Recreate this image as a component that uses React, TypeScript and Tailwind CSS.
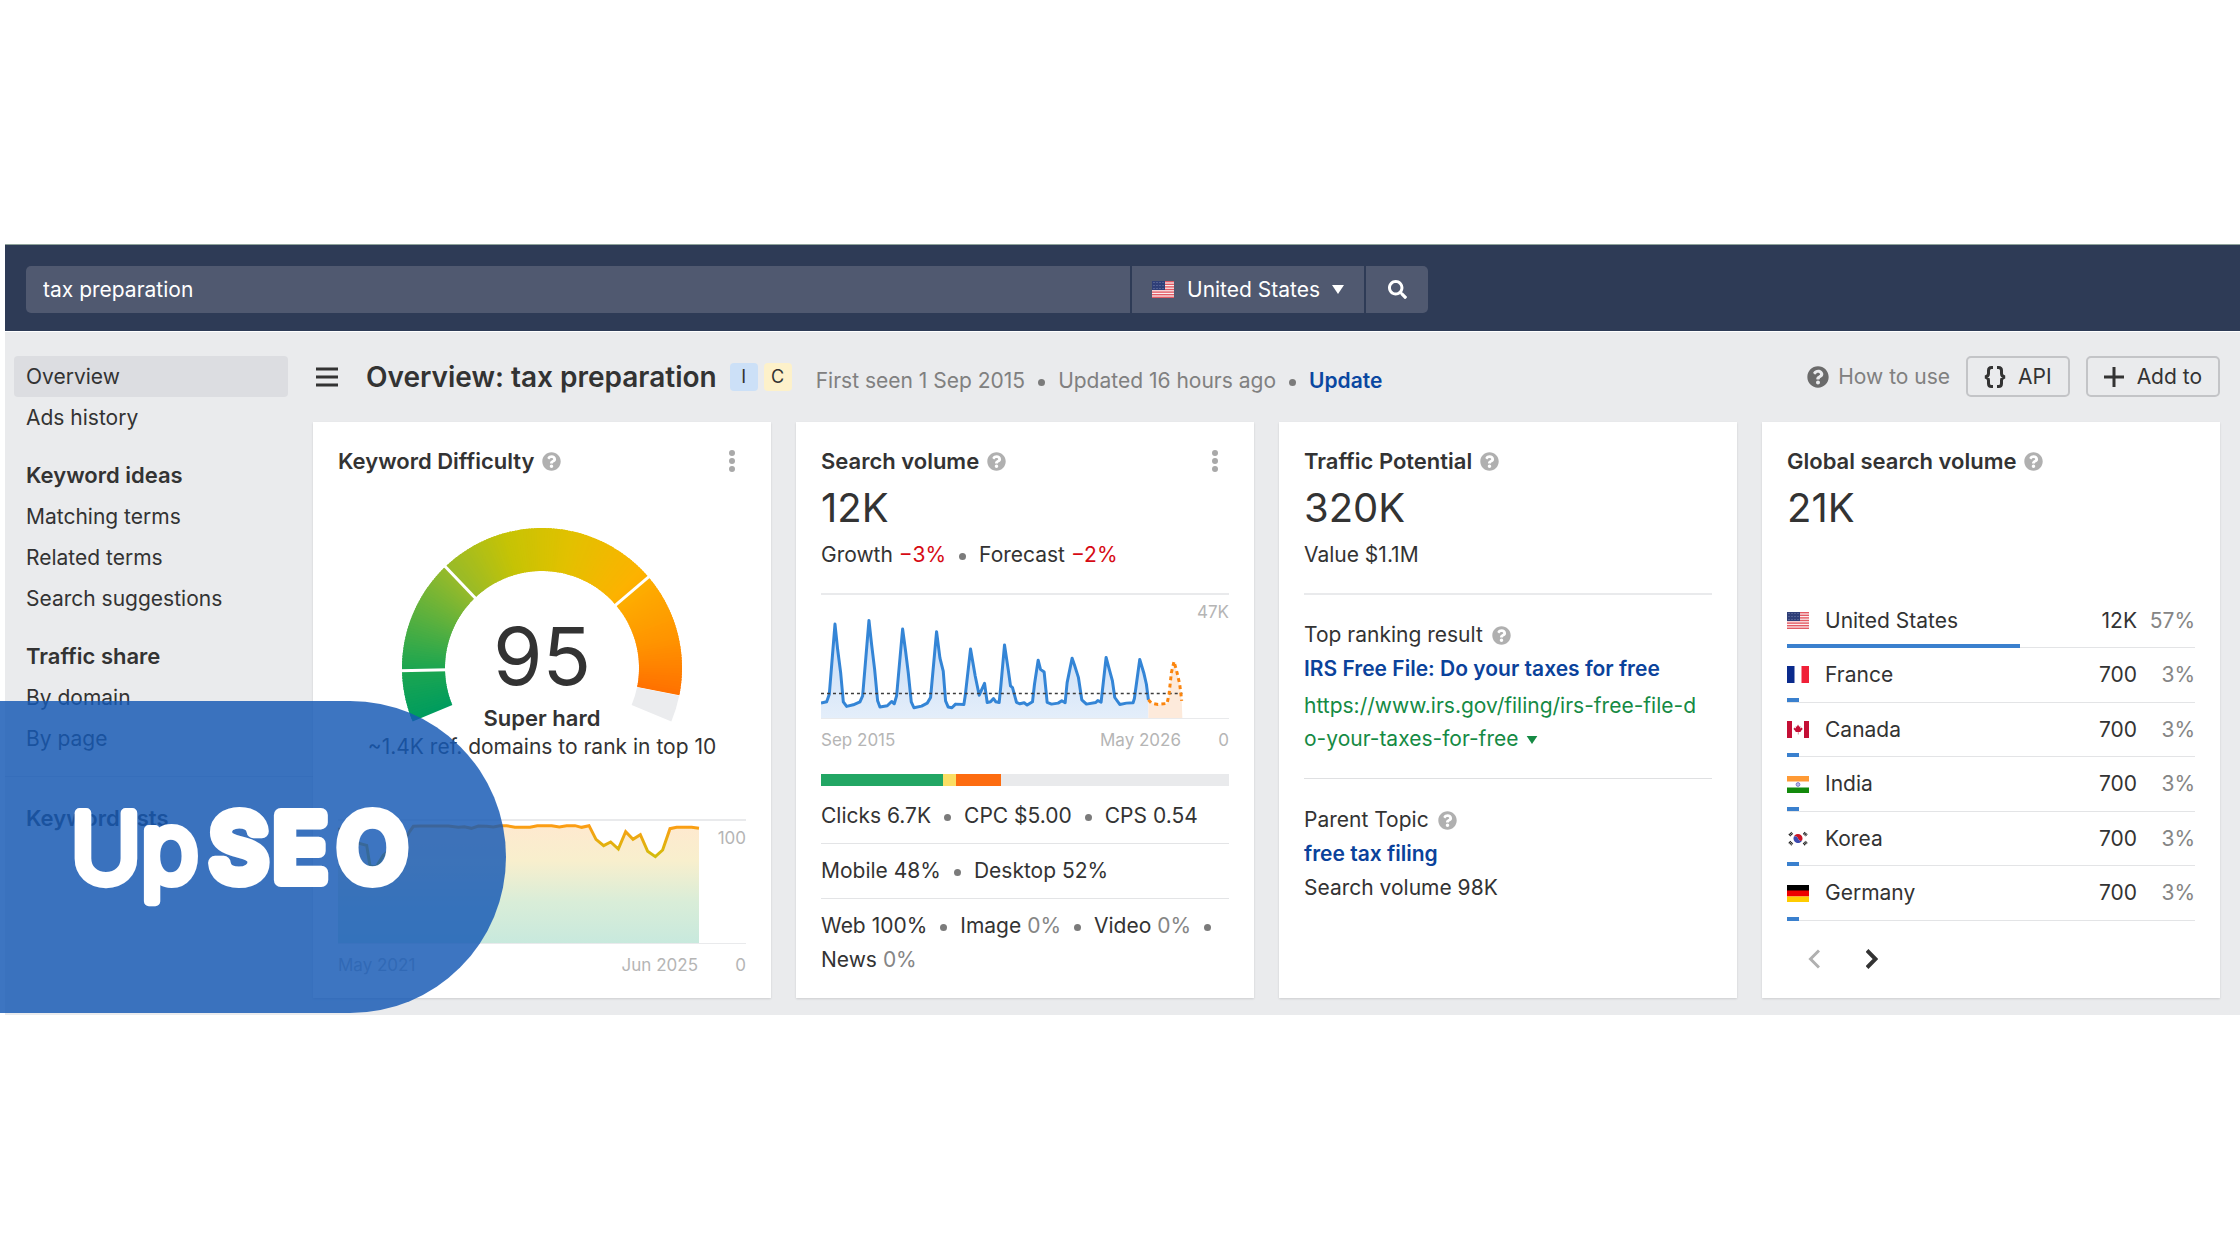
import type { ReactNode } from "react";
import { FaQuestionCircle, FaSearch } from "react-icons/fa";

const SEARCH_LINE =
  "93,402 110,398 118,375 135,163 143,240 152,310 160,398 170,412 190,407 210,398 218,380 237,152 245,225 254,300 263,395 270,414 292,410 305,397 313,404 320,380 338,178 347,245 355,310 364,398 372,416 395,411 412,402 422,385 440,186 450,265 460,305 467,395 475,414 486,416 497,405 522,406 526,380 542,238 556,320 568,378 584,342 592,400 602,398 611,388 618,398 628,400 633,350 644,226 655,300 662,350 668,355 680,400 690,404 703,401 712,408 728,398 734,345 745,272 752,300 763,308 772,400 785,405 805,402 816,395 826,401 832,340 847,266 855,290 866,325 876,392 890,405 918,400 924,394 934,399 949,264 960,305 968,335 975,385 990,406 1010,402 1030,401 1034,388 1050,270 1062,310 1070,345 1076,392";
const FORECAST_LINE = "1076,392 1085,402 1105,406 1132,403 1138,375 1145,310 1153,276 1162,310 1170,345 1176,395";
const DIFFICULTY_LINE =
  "-186,72 -166,70 -150,84 -130,112 -100,120 -90,182 -72,186 -50,150 -25,130 0,128 28,80 40,63 60,62 145,62 175,66 193,64 214,69 235,62 260,63 280,65 300,61 320,61 345,66 390,66 412,61 455,61 478,65 500,61 525,61 545,66 567,61 588,102 611,121 632,110 655,131 677,79 699,102 721,88 743,138 766,154 788,134 810,70 830,66 875,66 897,69";

const GAUGE_STOPS: [number, number[]][] = [
  [0, [0, 156, 94]],
  [0.1, [30, 166, 80]],
  [0.2, [90, 176, 62]],
  [0.3, [150, 186, 42]],
  [0.43, [198, 195, 5]],
  [0.55, [225, 193, 0]],
  [0.7, [253, 178, 0]],
  [0.84, [255, 148, 0]],
  [0.95, [255, 112, 0]],
];

function gaugeColor(t: number) {
  const hi = Math.max(1, GAUGE_STOPS.findIndex(([stop]) => stop >= t));
  const [t0, a] = GAUGE_STOPS[hi - 1];
  const [t1, b] = GAUGE_STOPS[hi];
  const k = (t - t0) / (t1 - t0);
  return `rgb(${a.map((v, i) => Math.round(v + (b[i] - v) * k)).join(",")})`;
}

function gaugePoint(t: number, radius: number) {
  const angle = ((202.5 - t * 225) * Math.PI) / 180;
  return `${(145 + radius * Math.cos(angle)).toFixed(2)},${(142 - radius * Math.sin(angle)).toFixed(2)}`;
}

function ringSlice(from: number, to: number) {
  return `M${gaugePoint(from, 140)} A140,140 0 0 1 ${gaugePoint(to, 140)} L${gaugePoint(to, 97)} A97,97 0 0 0 ${gaugePoint(from, 97)}Z`;
}

function Gauge() {
  const steps = 190;
  return (
    <svg viewBox="0 0 290 206" className="h-[206px] w-[290px]" aria-hidden="true">
      {Array.from({ length: steps }, (_, i) => {
        const from = (i / steps) * 0.95;
        const to = Math.min(0.95, ((i + 1.6) / steps) * 0.95);
        return <path key={i} d={ringSlice(from, to)} fill={gaugeColor(from)} />;
      })}
      <path d={ringSlice(0.951, 1)} fill="#ebecee" />
      {[0.095, 0.306, 0.72].map((t) => (
        <path key={t} d={`M${gaugePoint(t, 94)} L${gaugePoint(t, 143)}`} stroke="#fff" strokeWidth="3" />
      ))}
    </svg>
  );
}

function Flag({ code }: { code: string }) {
  return (
    <svg viewBox="0 0 22 17" className="h-[17px] w-[22px] shrink-0" aria-hidden="true">
      {code === "us" && (
        <>
          <rect width="22" height="17" fill="#fbeff0" />
          {[0, 1, 2, 3, 4, 5, 6].map((i) => (
            <rect key={i} y={i * 2.6} width="22" height="1.4" fill="#e35a64" />
          ))}
          <rect width="13" height="9" fill="#2f3f78" />
          {[2, 5, 8, 11].map((x) => [1.5, 4.5, 7.5].map((y) => <circle key={`${x}-${y}`} cx={x} cy={y} r="0.5" fill="#8d98bd" />))}
        </>
      )}
      {code === "fr" && (
        <>
          <rect width="7.5" height="17" fill="#0a2a8c" />
          <rect x="14.5" width="7.5" height="17" fill="#f02038" />
        </>
      )}
      {code === "ca" && (
        <>
          <rect width="5" height="17" fill="#c40f35" />
          <rect x="17" width="5" height="17" fill="#c40f35" />
          <path d="M11 3.5l1.2 2.2 1.2-.5-.3 2.2 1.7-.9.3 1 .9.2-2.4 2.5.2.9-2.4-.2v2.6h-.5v-2.6l-2.5.2.2-.9L6.2 7.7l.9-.2.3-1 1.6.9-.3-2.2 1.2.5z" fill="#c40f35" />
        </>
      )}
      {code === "in" && (
        <>
          <rect width="22" height="5.5" fill="#ff9a35" />
          <rect y="11.5" width="22" height="5.5" fill="#138a0c" />
          <circle cx="11" cy="8.5" r="1.9" fill="#b9b7e3" stroke="#6a67c0" strokeWidth="0.8" />
        </>
      )}
      {code === "kr" && (
        <>
          <path d="M6.8 6.8a4.4 4.4 0 0 1 8.4 3.4c-1.5 1.6-3.3.6-4.2-1.7-.9-2-2.7-2.8-4.2-1.7z" fill="#cc1424" />
          <path d="M6.8 6.8c1.5-1.1 3.3-.3 4.2 1.7.9 2.3 2.7 3.3 4.2 1.7a4.4 4.4 0 0 1-8.4-3.4z" fill="#3c4bb0" />
          <g stroke="#222" strokeWidth="3" strokeDasharray="1.2 0.4">
            <path d="M2.3 5.3l3-2.4M16.7 2.9l3 2.4M2.3 11.9l3 2.6M16.7 14.5l3-2.6" />
          </g>
        </>
      )}
      {code === "de" && (
        <>
          <rect width="22" height="6" fill="#000" />
          <rect y="5.5" width="22" height="6" fill="#e00" />
          <rect y="11.5" width="22" height="5.5" fill="#fc0" />
        </>
      )}
    </svg>
  );
}

const Dot = () => <span className="mx-[13px] inline-block size-[7px] rounded-full bg-[#7b7b7b] align-middle" />;

const Help = () => (
  <button type="button" aria-label="Help" className="text-[#b0b0b0]">
    <FaQuestionCircle className="size-[19px]" />
  </button>
);

function Caret({ className }: { className: string }) {
  return (
    <svg viewBox="0 0 12 9" className={className} fill="currentColor" aria-hidden="true">
      <path d="M0 0h12L6 9z" />
    </svg>
  );
}

function CardTitle({ children, menu }: { children: ReactNode; menu?: boolean }) {
  return (
    <div className="flex items-center gap-2 leading-[34px]">
      <h2 className="text-[22px] font-semibold">{children}</h2>
      <Help />
      {menu && (
        <button type="button" aria-label={`${children} menu`} className="mr-[11px] ml-auto text-[#a9a9a9]">
          <svg viewBox="0 0 6 22" className="h-[22px] w-[6px]" fill="currentColor">
            <circle cx="3" cy="3" r="3" />
            <circle cx="3" cy="11" r="3" />
            <circle cx="3" cy="19" r="3" />
          </svg>
        </button>
      )}
    </div>
  );
}

const Card = ({ children }: { children: ReactNode }) => (
  <section className="flex min-h-[576px] flex-col bg-white px-[25px] pt-[22px] pb-[21px] shadow-[0_1px_2px_rgba(0,0,0,0.12)]">{children}</section>
);

const BigNumber = ({ children }: { children: ReactNode }) => <p className="text-[40px] leading-[60px]">{children}</p>;

function ChartLabels({ from, to }: { from: string; to: string }) {
  return (
    <div className="mt-[9px] flex text-[17px] leading-6 text-[#b5b5b5]">
      <span>{from}</span>
      <span className="ml-auto">{to}</span>
      <span className="w-12 text-right">0</span>
    </div>
  );
}

function NavGroup({ title, items }: { title?: string; items: string[] }) {
  return (
    <div className="mb-[17px] pr-[25px] pl-[9px] leading-[41px]">
      {title && <h3 className="px-3 text-[22px] font-semibold">{title}</h3>}
      <ul>
        {items.map((item) => (
          <li key={item}>
            <a href="#" className={item === "Overview" ? "block rounded-[4px] bg-[#dcdde1] px-3" : "block px-3"}>
              {item}
            </a>
          </li>
        ))}
      </ul>
    </div>
  );
}

const COUNTRIES = [
  { code: "us", name: "United States", volume: "12K", share: 57 },
  { code: "fr", name: "France", volume: "700", share: 3 },
  { code: "ca", name: "Canada", volume: "700", share: 3 },
  { code: "in", name: "India", volume: "700", share: 3 },
  { code: "kr", name: "Korea", volume: "700", share: 3 },
  { code: "de", name: "Germany", volume: "700", share: 3 },
];

function TopBar() {
  return (
    <header className="border-t border-b border-t-[#8fa39b] border-b-white bg-[#2e3b56] pt-[21px] pb-[18px] pl-[21px] text-white">
      <form className="flex h-[47px] w-[1402px] max-w-full gap-[2px] overflow-hidden rounded-[5px]" onSubmit={(e) => e.preventDefault()}>
        <input aria-label="Keyword" defaultValue="tax preparation" className="min-w-0 flex-1 bg-[#505970] px-[17px] outline-none" />
        <div className="relative flex w-[232px] items-center bg-[#505970]">
          <span className="pointer-events-none absolute left-5">
            <Flag code="us" />
          </span>
          <select aria-label="Country" className="h-full w-full appearance-none bg-transparent pl-[55px] outline-none">
            <option>United States</option>
          </select>
          <Caret className="pointer-events-none absolute right-5 h-[9px] w-3" />
        </div>
        <button type="submit" aria-label="Search" className="flex w-[62px] items-center justify-center bg-[#505970]">
          <FaSearch className="size-[19px]" />
        </button>
      </form>
    </header>
  );
}

function PageHeader() {
  return (
    <div className="flex items-center pt-6 pb-[25px]">
      <button type="button" aria-label="Toggle menu" className="ml-[3px]">
        <svg viewBox="0 0 22 20" className="h-5 w-[22px]" stroke="currentColor" strokeWidth="3">
          <path d="M0 2h22M0 10h22M0 18h22" />
        </svg>
      </button>
      <h1 className="ml-7 pt-[2px] text-[28px] leading-[39px] font-semibold">Overview: tax preparation</h1>
      <span className="ml-[13px] size-7 rounded-[4px] bg-[#cce0f7] text-center text-[18px] leading-7">I</span>
      <span className="ml-[6px] size-7 rounded-[4px] bg-[#fdf1ca] text-center text-[18px] leading-7">C</span>
      <p className="ml-6 pt-2 text-[#808080]">
        First seen 1 Sep 2015
        <Dot />
        Updated 16 hours ago
        <Dot />
        <a href="#" className="font-semibold text-[#0a47a1]">
          Update
        </a>
      </p>
      <a href="#" className="ml-auto flex items-center gap-[9px] text-[#808080]">
        <FaQuestionCircle className="size-[22px] text-[#6b6b6b]" />
        How to use
      </a>
      <button type="button" className="ml-4 flex h-[41px] items-center gap-3 rounded-[5px] border-2 border-[#c3c4c7] px-4">
        <svg viewBox="0 0 22 22" className="size-[22px]" fill="none" stroke="currentColor" strokeWidth="3">
          <path d="M9 1.5H7.5Q4.5 1.5 4.5 4.5V7.5Q4.5 10.5 1 11Q4.5 11.5 4.5 14.5V17.5Q4.5 20.5 7.5 20.5H9M13 1.5h1.5Q17.5 1.5 17.5 4.5V7.5Q17.5 10.5 21 11Q17.5 11.5 17.5 14.5V17.5Q17.5 20.5 14.5 20.5H13" />
        </svg>
        API
      </button>
      <button type="button" className="ml-4 flex h-[41px] items-center gap-[13px] rounded-[5px] border-2 border-[#c3c4c7] px-4">
        <svg viewBox="0 0 20 20" className="size-5" stroke="currentColor" strokeWidth="3">
          <path d="M10 0v20M0 10h20" />
        </svg>
        Add to
      </button>
    </div>
  );
}

function DifficultyCard() {
  return (
    <Card>
      <CardTitle menu>Keyword Difficulty</CardTitle>
      <div className="relative mt-12 flex justify-center">
        <Gauge />
        <div className="absolute inset-x-0 bottom-0 flex flex-col items-center gap-2">
          <span className="text-[80px] leading-[80px]">95</span>
          <span className="text-[22px] leading-7 font-semibold">Super hard</span>
        </div>
      </div>
      <p className="text-center leading-[30px]">~1.4K ref. domains to rank in top 10</p>
      <div className="relative mt-[57px] border-t-2 border-b border-[#e9eaec]">
        <svg viewBox="-186 47 1224 366" preserveAspectRatio="none" className="block h-[122px] w-full overflow-visible" fill="none">
          <defs>
            <linearGradient id="difficulty-line" gradientUnits="userSpaceOnUse" x1="0" x2="0" y1="60" y2="170">
              <stop offset="0" stopColor="#fc9d14" />
              <stop offset="1" stopColor="#ccc20a" />
            </linearGradient>
            <linearGradient id="difficulty-area" x1="0" x2="0" y1="0" y2="1">
              <stop offset="0" stopColor="#fee9cf" />
              <stop offset="0.3" stopColor="#f8efcd" />
              <stop offset="0.65" stopColor="#d9edd8" />
              <stop offset="1" stopColor="#c8e9dd" />
            </linearGradient>
          </defs>
          <polygon points={`-186,413 ${DIFFICULTY_LINE} 897,413`} fill="url(#difficulty-area)" />
          <polyline points={DIFFICULTY_LINE} stroke="url(#difficulty-line)" strokeWidth="9" />
        </svg>
        <span className="absolute top-[5px] right-0 text-[17px] leading-6 text-[#b5b5b5]">100</span>
      </div>
      <ChartLabels from="May 2021" to="Jun 2025" />
    </Card>
  );
}

function VolumeCard() {
  return (
    <Card>
      <CardTitle menu>Search volume</CardTitle>
      <BigNumber>12K</BigNumber>
      <p className="leading-[34px]">
        Growth <span className="text-[#d60a14]">−3%</span>
        <Dot />
        Forecast <span className="text-[#d60a14]">−2%</span>
      </p>
      <div className="relative mt-[21px] border-t-2 border-b border-[#e9eaec]">
        <svg viewBox="93 75 1225 372" preserveAspectRatio="none" className="block h-[123px] w-full" fill="none">
          <defs>
            <linearGradient id="volume-area" x1="0" x2="0" y1="0" y2="1">
              <stop offset="0" stopColor="#c3daf6" />
              <stop offset="1" stopColor="#e4eefa" />
            </linearGradient>
          </defs>
          <polygon points={`93,447 ${SEARCH_LINE} 1076,447`} fill="url(#volume-area)" />
          <polygon points={`1076,447 ${FORECAST_LINE} 1178,447`} fill="#fdeadb" />
          <polyline points={SEARCH_LINE} stroke="#3485d6" strokeWidth="9" strokeLinejoin="round" />
          <path d="M93 373H1178" stroke="#3d3d3d" strokeWidth="4" strokeDasharray="9 9" />
          <polyline points={FORECAST_LINE} stroke="#fb850e" strokeWidth="9" strokeDasharray="12 10" />
        </svg>
        <span className="absolute top-[5px] right-0 text-[17px] leading-6 text-[#b5b5b5]">47K</span>
      </div>
      <ChartLabels from="Sep 2015" to="May 2026" />
      <div className="mt-[22px] flex h-3 bg-[#e9eaec]">
        <div className="w-[30%] bg-[#22a664]" />
        <div className="w-[3%] bg-[#fade64]" />
        <div className="w-[11%] bg-[#fd6c10]" />
      </div>
      <p className="mt-[13px] pb-[10px] leading-[34px]">
        Clicks 6.7K
        <Dot />
        CPC $5.00
        <Dot />
        CPS 0.54
      </p>
      <p className="border-t border-[#e3e4e6] py-[10px] leading-[34px]">
        Mobile 48%
        <Dot />
        Desktop 52%
      </p>
      <p className="border-t border-[#e3e4e6] pt-[10px] leading-[34px]">
        Web 100%
        <Dot />
        Image <span className="text-[#858585]">0%</span>
        <Dot />
        Video <span className="text-[#858585]">0%</span>
        <Dot />
        <br />
        News <span className="text-[#858585]">0%</span>
      </p>
    </Card>
  );
}

function TrafficCard() {
  return (
    <Card>
      <CardTitle>Traffic Potential</CardTitle>
      <BigNumber>320K</BigNumber>
      <p className="leading-[34px]">Value $1.1M</p>
      <div className="mt-[21px] border-t-2 border-[#e9eaec] py-[23px] leading-[34px]">
        <div className="flex items-center gap-[9px]">
          Top ranking result <Help />
        </div>
        <a href="#" className="block font-semibold text-[#0a429b]">
          IRS Free File: Do your taxes for free
        </a>
        <a href="#" className="mt-[3px] block pr-3 leading-[33px] break-all text-[#158a44]">
          https://www.irs.gov/filing/irs-free-file-do-your-taxes-for-free
          <Caret className="ml-2 inline h-2 w-3" />
        </a>
      </div>
      <div className="border-t border-[#dfe0e2] pt-6 leading-[34px]">
        <div className="flex items-center gap-[9px]">
          Parent Topic <Help />
        </div>
        <a href="#" className="block font-semibold text-[#0a429b]">
          free tax filing
        </a>
        <p>Search volume 98K</p>
      </div>
    </Card>
  );
}

function GlobalCard() {
  return (
    <Card>
      <CardTitle>Global search volume</CardTitle>
      <BigNumber>21K</BigNumber>
      <table className="mt-[56px] h-[327px] w-full">
        <tbody>
          {COUNTRIES.map((c) => (
            <tr key={c.code} className="relative border-b border-[#e3e4e6]">
              <td className="w-[38px]">
                <Flag code={c.code} />
                <span className="absolute -bottom-px left-0 h-1 bg-[#3a80ce]" style={{ width: `${c.share}%` }} />
              </td>
              <td>{c.name}</td>
              <td className="text-right">{c.volume}</td>
              <td className="w-[58px] text-right text-[#858585]">{c.share}%</td>
            </tr>
          ))}
        </tbody>
      </table>
      <div className="mt-7 flex gap-[46px] pl-[21px]">
        <button type="button" aria-label="Previous" className="text-[#b0b0b0]">
          <svg viewBox="0 0 12 20" className="h-5 w-3" fill="none" stroke="currentColor" strokeWidth="3">
            <path d="M11 1.5L2.5 10l8.5 8.5" />
          </svg>
        </button>
        <button type="button" aria-label="Next">
          <svg viewBox="0 0 12 20" className="h-5 w-3" fill="none" stroke="currentColor" strokeWidth="4">
            <path d="M1 1.5L9.5 10 1 18.5" />
          </svg>
        </button>
      </div>
    </Card>
  );
}

function LogoBadge() {
  return (
    <div className="absolute bottom-[2px] left-0 h-[312px] w-[506px] rounded-r-full bg-[rgba(22,89,181,0.83)]">
      <svg viewBox="0 0 506 312" className="h-full w-full" role="img" aria-label="UpSEO">
        <g fontFamily="Inter, sans-serif" fill="#fff" stroke="#fff" strokeLinejoin="round" strokeLinecap="round">
          <text x="71" y="181" fontSize="95" fontWeight="300" strokeWidth="10">
            Up
          </text>
          <text x="210 273 338" y="179" fontSize="90" fontWeight="400" strokeWidth="14">
            SEO
          </text>
        </g>
      </svg>
    </div>
  );
}

export default function App() {
  return (
    <div className="min-h-screen bg-white pt-[244px] font-[Inter,sans-serif] text-[21px] text-[#333]">
      <div className="relative pl-[5px]">
        <TopBar />
        <div className="flex bg-[#eaebed]">
          <nav className="w-[308px] shrink-0 pt-6">
            <NavGroup items={["Overview", "Ads history"]} />
            <NavGroup title="Keyword ideas" items={["Matching terms", "Related terms", "Search suggestions"]} />
            <NavGroup title="Traffic share" items={["By domain", "By page"]} />
            <hr className="border-[#d6d7da]" />
            <div className="pt-[21px]">
              <NavGroup title="Keyword lists" items={[]} />
            </div>
          </nav>
          <main className="min-w-0 flex-1 pr-5 pb-[17px]">
            <PageHeader />
            <div className="grid grid-cols-4 gap-[25px]">
              <DifficultyCard />
              <VolumeCard />
              <TrafficCard />
              <GlobalCard />
            </div>
          </main>
        </div>
        <LogoBadge />
      </div>
    </div>
  );
}
